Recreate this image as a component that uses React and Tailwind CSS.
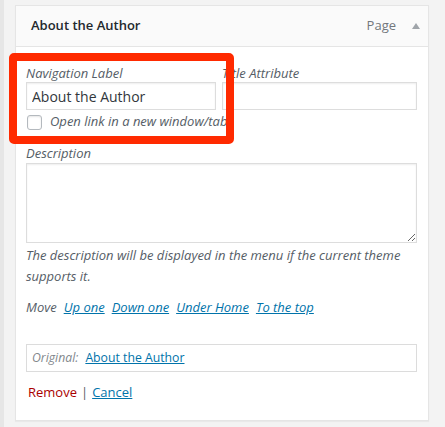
import React from 'react';

const font = { fontFamily: '"Open Sans", "Liberation Sans", sans-serif' };

export default function App() {
  return (
    <div className="relative w-[445px] h-[427px] bg-[#f3f3f3] flex" style={font}>
      <div className="w-[4px] h-full bg-[#e6e6e6]" />
      <div className="ml-[11px] mt-[5px] w-[414px] h-[416px] border border-[#e5e5e5] bg-white shadow-[0_1px_1px_rgba(0,0,0,0.04)] flex flex-col">
        {/* header */}
        <div className="h-[41px] bg-[#fafafa] border-b border-[#e5e5e5] flex items-center pl-[15px] pr-[8px]">
          <span className="text-[13px] font-semibold text-[#23282d]">About the Author</span>
          <span className="ml-auto text-[13px] text-[#72777c]">Page</span>
          <span className="ml-[16px] w-0 h-0 border-l-[4px] border-r-[4px] border-b-[6px] border-l-transparent border-r-transparent border-b-[#a0a5aa]" />
        </div>

        {/* settings */}
        <div className="pl-[10px] pr-[11px] pt-[17px] pb-[15px] text-[13px] text-[#555d66]">
          <div className="flex gap-[6px]">
            <div className="w-[190px]">
              <div className="italic leading-[18px]">Navigation Label</div>
              <input
                readOnly
                value="About the Author"
                className="w-full h-[28px] border border-[#ddd] px-[5px] text-[14px] text-[#32373c] shadow-[inset_0_1px_2px_rgba(0,0,0,0.07)] outline-none"
              />
            </div>
            <div className="flex-1">
              <div className="italic leading-[18px]">Title Attribute</div>
              <input
                readOnly
                value=""
                className="w-full h-[28px] border border-[#ddd] px-[5px] text-[14px] shadow-[inset_0_1px_2px_rgba(0,0,0,0.07)] outline-none"
              />
            </div>
          </div>
          <div className="h-[20px] flex items-center mt-[2px]">
            <span className="ml-[1px] w-[15px] h-[15px] rounded-[3px] border border-[#b4b9be] bg-white shadow-[inset_0_1px_2px_rgba(0,0,0,0.1)]" />
            <span className="ml-[8px] italic whitespace-nowrap">Open link in a new window/tab</span>
          </div>

          <div className="mt-[12px] italic leading-[18px]">Description</div>
          <textarea
            readOnly
            className="block mt-[1px] w-full h-[80px] border border-[#ddd] shadow-[inset_0_1px_2px_rgba(0,0,0,0.07)] outline-none"
          />
          <p className="mt-[2px] italic leading-[21px]">
            The description will be displayed in the menu if the current theme supports it.
          </p>

          <div className="mt-[10px] leading-[21px] flex gap-[7px] italic">
            <span>Move</span>
            <a className="text-[#0073aa] underline">Up one</a>
            <a className="text-[#0073aa] underline">Down one</a>
            <a className="text-[#0073aa] underline">Under Home</a>
            <a className="text-[#0073aa] underline">To the top</a>
          </div>

          <div className="mt-[26px] h-[28px] border border-[#dcdcdc] flex items-center px-[5px] gap-[7px] text-[12.25px]">
            <span className="italic text-[#82878c]">Original:</span>
            <a className="text-[#0073aa] underline">About the Author</a>
          </div>

          <div className="mt-[10px] leading-[21px] flex items-center pl-[2px]">
            <a className="text-[#a00]">Remove</a>
            <span className="ml-[4px] text-[#555d66]">|</span>
            <a className="ml-[2px] px-[2px] text-[#0073aa] underline">Cancel</a>
          </div>
        </div>
      </div>

      {/* annotation */}
      <div className="absolute left-[9px] top-[53px] w-[225px] h-[91px] border-[8px] border-[#ff2a00] rounded-[5px]" />
    </div>
  );
}
